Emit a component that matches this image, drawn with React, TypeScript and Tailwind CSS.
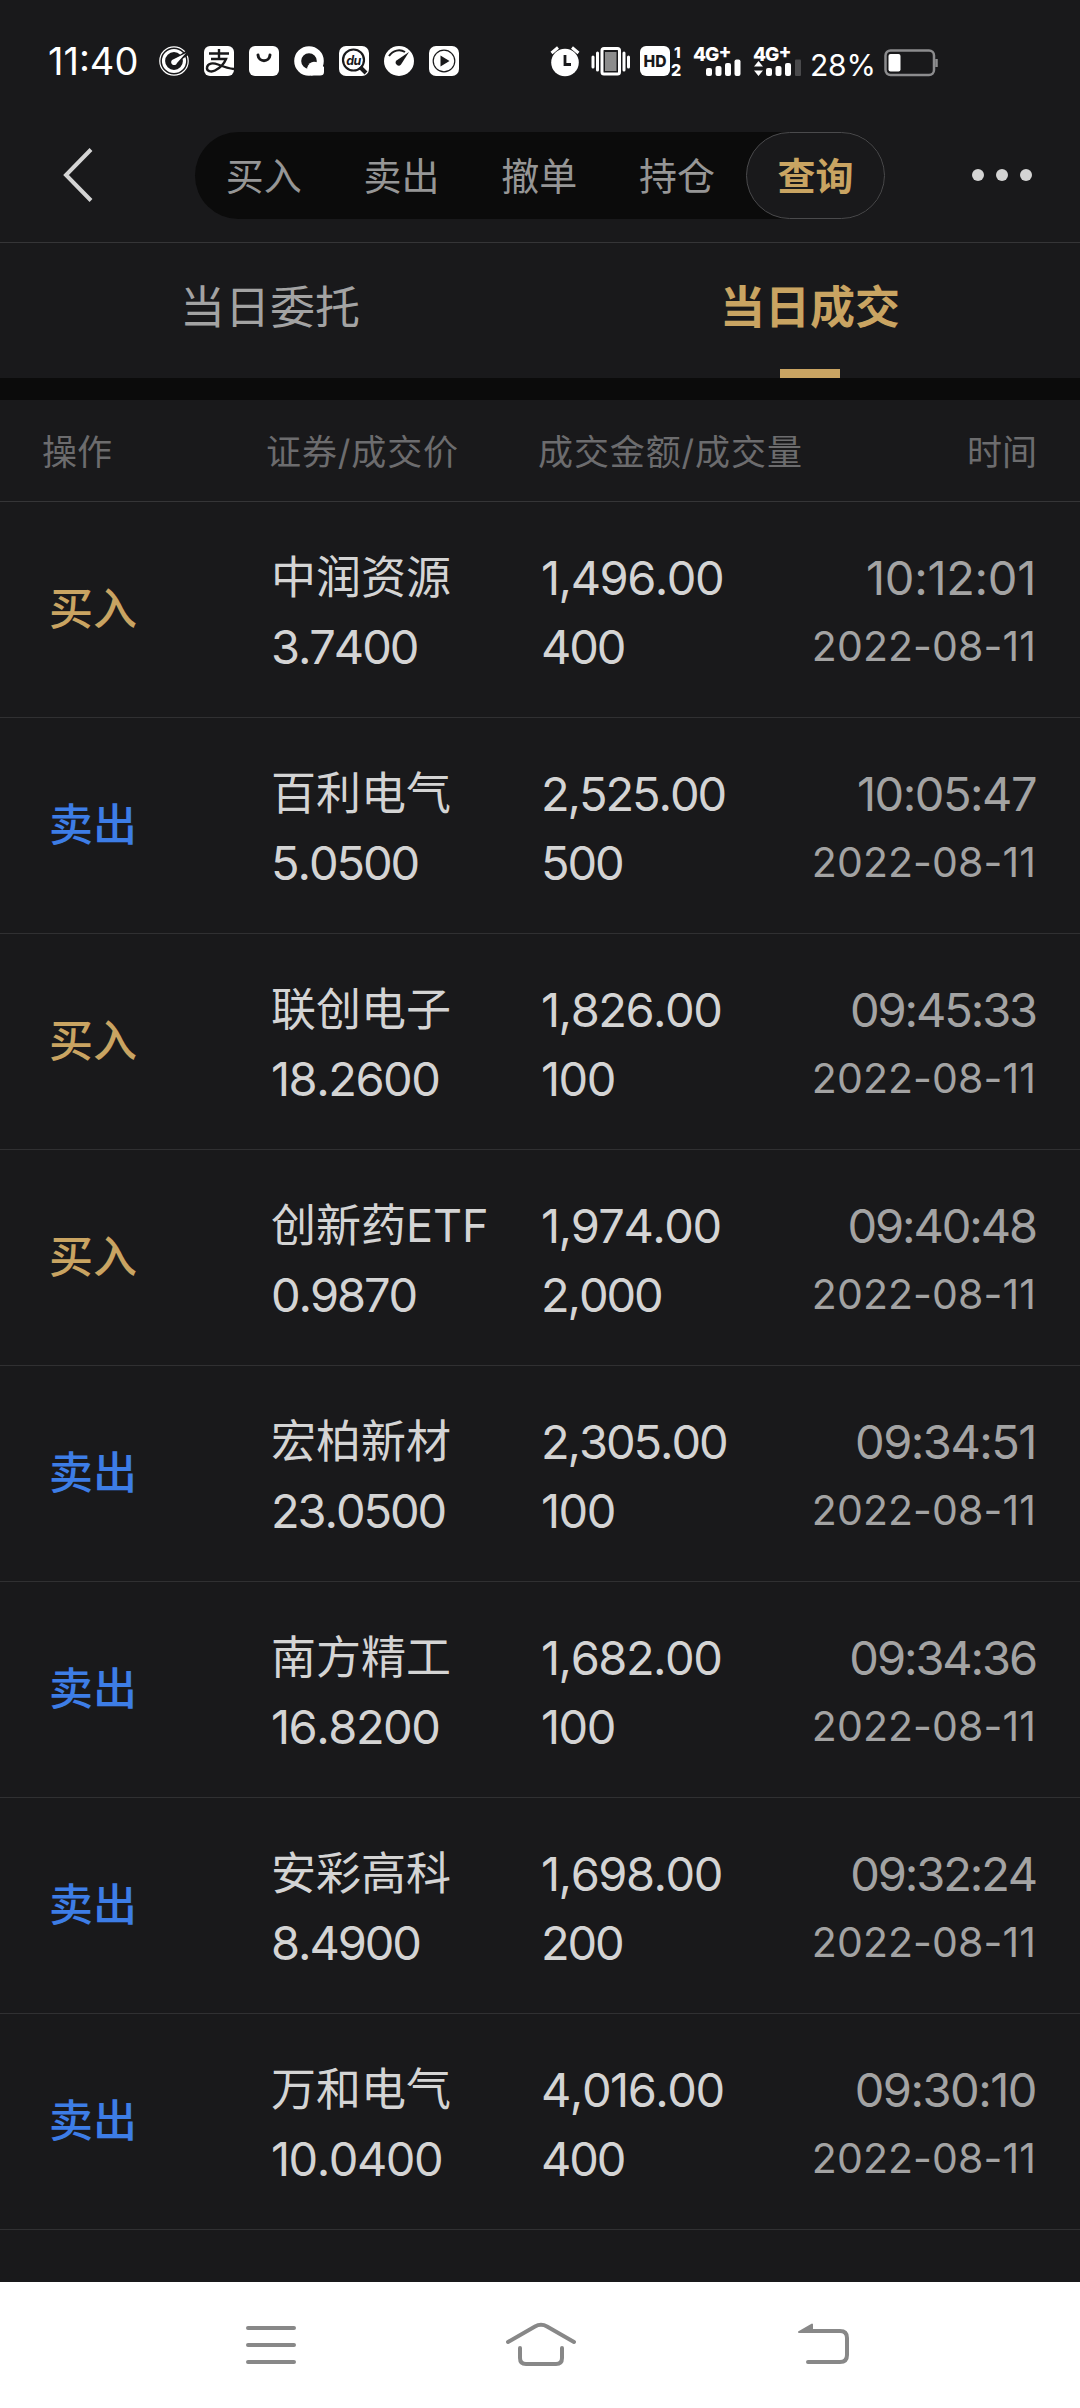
import type { ReactNode } from "react";

type Trade = {
  side: "buy" | "sell";
  name: string;
  price: string;
  amount: string;
  volume: string;
  time: string;
  date: string;
};

const trades: Trade[] = [
  { side: "buy", name: "中润资源", price: "3.7400", amount: "1,496.00", volume: "400", time: "10:12:01", date: "2022-08-11" },
  { side: "sell", name: "百利电气", price: "5.0500", amount: "2,525.00", volume: "500", time: "10:05:47", date: "2022-08-11" },
  { side: "buy", name: "联创电子", price: "18.2600", amount: "1,826.00", volume: "100", time: "09:45:33", date: "2022-08-11" },
  { side: "buy", name: "创新药ETF", price: "0.9870", amount: "1,974.00", volume: "2,000", time: "09:40:48", date: "2022-08-11" },
  { side: "sell", name: "宏柏新材", price: "23.0500", amount: "2,305.00", volume: "100", time: "09:34:51", date: "2022-08-11" },
  { side: "sell", name: "南方精工", price: "16.8200", amount: "1,682.00", volume: "100", time: "09:34:36", date: "2022-08-11" },
  { side: "sell", name: "安彩高科", price: "8.4900", amount: "1,698.00", volume: "200", time: "09:32:24", date: "2022-08-11" },
  { side: "sell", name: "万和电气", price: "10.0400", amount: "4,016.00", volume: "400", time: "09:30:10", date: "2022-08-11" },
];

const menus = ["买入", "卖出", "撤单", "持仓"];

function AppIcon({ children }: { children: ReactNode }) {
  return (
    <svg viewBox="0 0 30 30" className="size-[30px]" fill="none">
      {children}
    </svg>
  );
}

function StatusBar() {
  return (
    <header className="flex h-[122px] items-start pl-[48px] pt-[40px] text-white">
      <span className="w-[111px] text-[38px] leading-[43px] [font-kerning:none]">11:40</span>
      <div className="mt-[6px] flex gap-[15px]">
        <AppIcon>
          <circle cx="15" cy="15" r="14.2" stroke="#fff" strokeWidth="1.2" />
          <circle cx="15" cy="15" r="10.5" stroke="#fff" strokeWidth="3.2" />
          <path d="M16 15L28 7" stroke="#19191b" strokeWidth="5" />
          <path d="M13 14L27 7L18 17A3 3 0 1 1 13 14Z" fill="#fff" />
        </AppIcon>
        <AppIcon>
          <rect width="30" height="30" rx="6" fill="#fff" />
          <path
            d="M5 7.5H25M15 3V13M7 13H22C20 18 16 22 11 24.5C7 26.5 2.5 25 3 21.5C3.5 17 9 16.5 14 18.5C19 20.5 24 22.5 30 23"
            stroke="#19191b"
            strokeWidth="2.4"
          />
        </AppIcon>
        <AppIcon>
          <rect width="30" height="30" rx="6" fill="#fff" />
          <path d="M9 9C9.5 16.5 20.5 16.5 21 9" stroke="#19191b" strokeWidth="3" strokeLinecap="round" />
        </AppIcon>
        <AppIcon>
          <circle cx="15" cy="15" r="11.3" stroke="#fff" strokeWidth="7" />
          <path d="M13 22C16 14 22 14 30 21V26Q30 29.5 26 29.5H17Z" fill="#fff" />
        </AppIcon>
        <AppIcon>
          <rect width="30" height="30" rx="7" fill="#fff" />
          <circle cx="14.5" cy="14" r="10.5" stroke="#19191b" strokeWidth="2.2" />
          <path d="M21 21L27 27" stroke="#19191b" strokeWidth="4" />
          <text x="14.5" y="18.5" textAnchor="middle" fontSize="12.5" fontWeight="700" fontStyle="italic" fill="#19191b" letterSpacing="-0.5">du</text>
        </AppIcon>
        <AppIcon>
          <circle cx="15" cy="15" r="15" fill="#fff" />
          <path d="M5 10C9 4 16 3 21 6" stroke="#19191b" strokeWidth="2" />
          <path d="M25 6L12.5 14.5A3 3 0 1 0 17 18.5Z" fill="#19191b" />
        </AppIcon>
        <AppIcon>
          <rect width="30" height="30" rx="7" fill="#fff" />
          <circle cx="15" cy="15" r="10.8" stroke="#19191b" strokeWidth="1.2" />
          <path d="M11.5 9.5L20.5 15L11.5 20.5Z" fill="#19191b" />
        </AppIcon>
      </div>

      <svg viewBox="0 0 260 34" className="ml-[91px] mt-[4px] h-[34px] w-[260px] overflow-visible" fill="#fff">
        <circle cx="15" cy="18.5" r="13.8" />
        <path d="M1.5 9L8 3.5M22 3.5L28.5 9" stroke="#fff" strokeWidth="3" />
        <path d="M15 11V20.5H21" stroke="#19191b" strokeWidth="2.8" fill="none" />
        <rect x="52" y="4.5" width="17.5" height="25.5" rx="2" fill="none" stroke="#fff" strokeWidth="3" />
        <rect x="55" y="8" width="11.5" height="19" fill="#8c8c8c" />
        <path d="M43 13V23M47.5 9V26M74 9V26M78.5 13V23" stroke="#fff" strokeWidth="3" strokeLinecap="round" />
        <rect x="90" y="2" width="30" height="30" rx="6" />
        <text x="93.5" y="23" textLength="23" lengthAdjust="spacingAndGlyphs" fontSize="16.5" fontWeight="800" fill="#19191b">HD</text>
        <text x="124" y="14" fontSize="15" fontWeight="800">1</text>
        <text x="121" y="32" fontSize="16" fontWeight="800">2</text>
        <text x="143" y="16.5" fontSize="19" fontWeight="800" letterSpacing="-1">
          4G<tspan dy="-3">+</tspan>
        </text>
        <rect x="156" y="24" width="6" height="8" rx="2" />
        <rect x="165.5" y="22" width="6" height="10" rx="2" />
        <rect x="175" y="19" width="6" height="13" rx="2" />
        <rect x="184.5" y="15.5" width="6" height="16.5" rx="2" />
        <text x="203" y="16.5" fontSize="19" fontWeight="800" letterSpacing="-1">
          4G<tspan dy="-3">+</tspan>
        </text>
        <path d="M208.5 17L213 22.5H204ZM208.5 32L213 26.5H204Z" />
        <rect x="216" y="24" width="6" height="8" rx="2" />
        <rect x="225.5" y="22" width="6" height="10" rx="2" />
        <rect x="235" y="19" width="6" height="13" rx="2" />
        <rect x="245" y="15.5" width="6" height="16.5" rx="1" fill="#4a4a4c" />
      </svg>
      <span className="w-[74px] text-[30px] leading-[50px] tracking-[-0.2px]">28%</span>
      <svg viewBox="0 0 56 28" className="mt-[9px] h-[28px] w-[56px]" fill="none">
        <rect x="1.5" y="1.5" width="48.5" height="24.5" rx="5" stroke="#8c8c8e" strokeWidth="2.5" />
        <rect x="4.5" y="5" width="12" height="17.5" rx="2" fill="#fff" />
        <path d="M52.5 10V18" stroke="#8c8c8e" strokeWidth="2.5" />
      </svg>
    </header>
  );
}

function TopNav() {
  return (
    <nav className="flex h-[121px] items-start border-b border-[#353537] pt-[10px]">
      <svg viewBox="0 0 30 54" className="ml-[63px] mt-[16px] h-[54px] w-[30px]" fill="none">
        <path d="M28 1.5L3 27L28 52.5" stroke="#d4d4d4" strokeWidth="4" />
      </svg>
      <div className="ml-[102px] flex h-[87px] w-[690px] rounded-full bg-[#0b0b0b]">
        {menus.map((menu) => (
          <span key={menu} className="w-[137.75px] text-center text-[38px] leading-[88px] text-[#969696]">
            {menu}
          </span>
        ))}
        <span className="w-[139px] rounded-full border border-[#4a4a4c] bg-[#19191b] text-center text-[38px] font-bold leading-[86px] text-[#c9a462]">
          查询
        </span>
      </div>
      <div className="ml-[87px] mt-[37px] flex gap-3">
        <i className="size-3 rounded-full bg-[#d4d4d4]" />
        <i className="size-3 rounded-full bg-[#d4d4d4]" />
        <i className="size-3 rounded-full bg-[#d4d4d4]" />
      </div>
    </nav>
  );
}

function Tabs() {
  return (
    <div className="flex h-[157px] border-b-[22px] border-[#0b0b0b] text-center text-[45px] leading-[129px]">
      <div className="flex-1 text-[#a3a3a3]">当日委托</div>
      <div className="flex flex-1 flex-col items-center justify-between font-bold text-[#c9a462]">
        <span className="h-[126px]">当日成交</span>
        <i className="h-[9px] w-[60px] bg-[#c9a462]" />
      </div>
    </div>
  );
}

// Inter's "1" is narrow, so strings with more of them get looser spacing
function Num({ value }: { value: string }) {
  const ones = value.split("1").length - 1;
  return (
    <p className="text-[47px] leading-[69px]" style={{ letterSpacing: -2.1 + ones * 0.6 }}>
      {value}
    </p>
  );
}

function TradeRow({ trade }: { trade: Trade }) {
  return (
    <article className="flex h-[216px] items-start border-b border-[#303032] pl-[49px] pr-[44px] pt-[41px] text-[#d4d4d4] [font-kerning:none]">
      {trade.side === "buy" ? (
        <span className="w-[222px] text-[44px] font-medium leading-[132px] text-[#c9a462]">买入</span>
      ) : (
        <span className="w-[222px] text-[44px] font-medium leading-[132px] text-[#3d7de6]">卖出</span>
      )}
      <div className="w-[270px]">
        <p className="text-[45px] leading-[69px]">{trade.name}</p>
        <Num value={trade.price} />
      </div>
      <div>
        <Num value={trade.amount} />
        <Num value={trade.volume} />
      </div>
      <div className="ml-auto text-right text-[#a3a3a3]">
        <Num value={trade.time} />
        <p className="text-[41px] leading-[69px] tracking-[0.1px]">{trade.date}</p>
      </div>
    </article>
  );
}

function SystemBar() {
  return (
    <footer className="mt-auto flex h-[126px] items-start bg-white pt-[38px]">
      <svg viewBox="0 0 1080 50" className="h-[50px] w-full" fill="none" stroke="#888" strokeWidth="4" strokeLinecap="round">
        <path d="M248 8H294M248 25H294M248 42H294" />
        <path d="M508 22L535 6.5Q541 3 547 6.5L574 22M520 28V38Q520 44 526 44H556Q562 44 562 38V28" />
        <path d="M808 42H840Q847 42 847 35V18Q847 11 840 11H808" />
        <path d="M799 12L812 4.5V12Z" fill="#888" strokeWidth="2" strokeLinejoin="round" />
      </svg>
    </footer>
  );
}

export default function App() {
  return (
    <main className="flex h-[2408px] w-[1080px] flex-col bg-[#19191b] font-[Inter,'Noto_Sans_CJK_SC',sans-serif]">
      <StatusBar />
      <TopNav />
      <Tabs />
      <div className="flex h-[102px] border-b border-[#353537] pl-[42px] pr-[43px] text-[35px] leading-[104px] text-[#6c6c6e]">
        <span className="w-[224px]">操作</span>
        <span className="w-[272px] tracking-[0.9px]">证券/成交价</span>
        <span className="tracking-[0.9px]">成交金额/成交量</span>
        <span className="ml-auto">时间</span>
      </div>
      <section>
        {trades.map((trade) => (
          <TradeRow key={trade.time} trade={trade} />
        ))}
      </section>
      <SystemBar />
    </main>
  );
}
